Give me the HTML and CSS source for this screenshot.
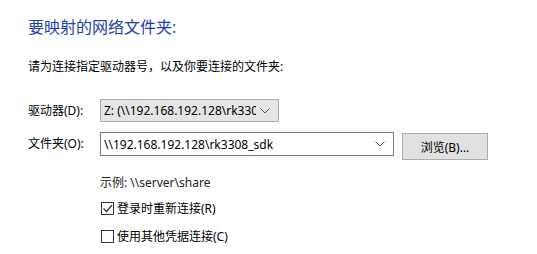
FILE: index.html
```html
<!DOCTYPE html>
<html lang="zh-CN">
<head>
    <meta charset="UTF-8">
    <title>映射网络驱动器</title>
    <link rel="stylesheet" href="styles.css">
</head>
<body>
    <div class="page">
        <h1 class="title">要映射的网络文件夹:</h1>
        <p class="intro">请为连接指定驱动器号，以及你要连接的文件夹:</p>

        <div class="row drive-row">
            <label class="label">驱动器(D):</label>
            <div class="combo combo-drive">
                <span class="combo-text">Z: (\\192.168.192.128\rk3308_sdk)</span>
                <svg class="arrow" width="10" height="6" viewBox="0 0 10 6"><path d="M0.5 0.5 L5 5 L9.5 0.5" fill="none" stroke="#555" stroke-width="1"/></svg>
            </div>
        </div>

        <div class="row folder-row">
            <label class="label">文件夹(O):</label>
            <div class="combo combo-folder">
                <span class="combo-text">\\192.168.192.128\rk3308_sdk</span>
                <svg class="arrow" width="10" height="6" viewBox="0 0 10 6"><path d="M0.5 0.5 L5 5 L9.5 0.5" fill="none" stroke="#555" stroke-width="1"/></svg>
            </div>
            <button class="browse">浏览(B)...</button>
        </div>

        <div class="options">
            <div class="example">示例: \\server\share</div>
            <div class="check">
                <span class="box checked">
                    <svg width="11" height="11" viewBox="0 0 11 11"><path d="M1.5 5.5 L4.5 8.5 L10 2" fill="none" stroke="#333" stroke-width="1.2"/></svg>
                </span>
                <span>登录时重新连接(R)</span>
            </div>
            <div class="check second">
                <span class="box"></span>
                <span>使用其他凭据连接(C)</span>
            </div>
        </div>
    </div>
</body>
</html>
```

FILE: styles.css
```css
body {
    margin: 0;
    background-color: #ffffff;
    font-family: "Noto Sans", "Noto Sans CJK SC", sans-serif;
    font-size: 12px;
    color: #000;
}
.page {
    padding: 17px 0 0 28px;
}
.title {
    margin: 0;
    font-size: 16px;
    font-weight: normal;
    line-height: 21px;
    color: #1e3ea8;
}
.intro {
    margin: 20px 0 0 0;
    line-height: 17px;
}
.row {
    display: flex;
    align-items: center;
}
.drive-row {
    margin-top: 24px;
}
.folder-row {
    margin-top: 10px;
    align-items: flex-start;
}
.label {
    width: 72px;
    line-height: 23px;
}
.folder-row .label {
    line-height: 24px;
}
.combo {
    display: flex;
    align-items: center;
    box-sizing: border-box;
    padding: 0 8px 0 3px;
    white-space: nowrap;
    overflow: hidden;
}
.combo-text {
    flex: 1;
    overflow: hidden;
}
.combo-drive {
    width: 179px;
    height: 23px;
    background-color: #e5e5e5;
    border: 1px solid #adadad;
}
.combo-folder {
    width: 294px;
    height: 24px;
    background-color: #fff;
    border: 1px solid #7a7a7a;
}
.arrow {
    margin-left: 4px;
    flex-shrink: 0;
}
.browse {
    margin: 1px 0 0 8px;
    width: 86px;
    height: 27px;
    background-color: #e1e1e1;
    border: 1px solid #adadad;
    font-family: inherit;
    font-size: 12px;
    padding: 0;
}
.options {
    margin-left: 72px;
}
.example {
    margin-top: 14px;
    line-height: 17px;
    color: #222;
}
.check {
    display: flex;
    align-items: center;
    margin-top: 9px;
    line-height: 17px;
}
.check.second {
    margin-top: 11px;
}
.box {
    width: 13px;
    height: 13px;
    box-sizing: border-box;
    border: 1px solid #333;
    margin: 0 3px 0 1px;
    display: flex;
    align-items: center;
    justify-content: center;
}
```
